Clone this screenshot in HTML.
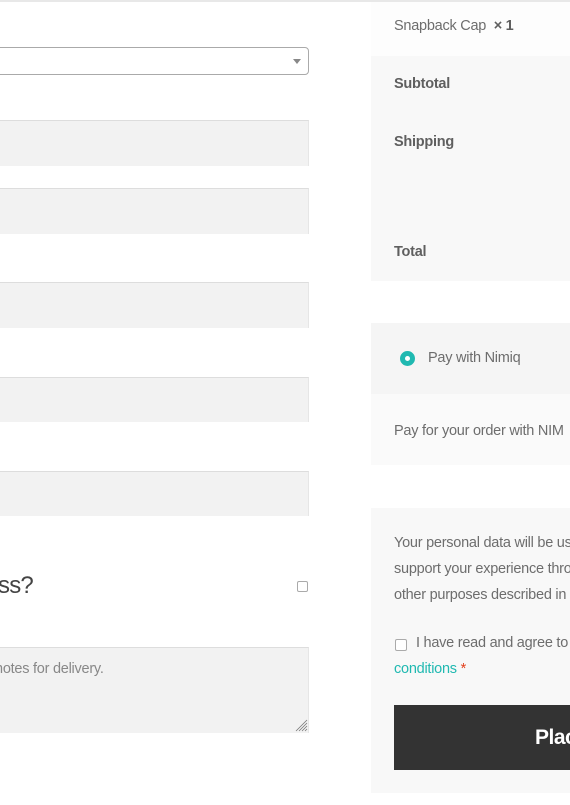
<!DOCTYPE html>
<html><head><meta charset="utf-8"><style>
*{margin:0;padding:0;box-sizing:border-box}
html,body{width:570px;height:805px;overflow:hidden;background:#fff;font-family:"Liberation Sans",sans-serif;color:#6d6d6d}
#w{position:relative;width:570px;height:805px;overflow:hidden}
.a{position:absolute}
.inp{position:absolute;left:0;width:309px;background:#f2f2f2;border-top:1px solid #ddd;border-right:1px solid #e6e6e6}
.t{position:absolute;font-size:14.5px;letter-spacing:-0.25px;white-space:nowrap}
b{font-weight:bold;color:#5f5f5f}
</style></head><body><div id="w">
<div class="a" style="left:0;top:0;width:570px;height:2px;background:#e8e8e8"></div>
<div class="a" style="left:-6px;top:47px;width:315px;height:28px;border:1px solid #aaa;border-radius:4px;background:#fff"></div>
<div class="a" style="left:293px;top:59px;width:0;height:0;border-left:4px solid transparent;border-right:4px solid transparent;border-top:5px solid #888"></div>
<div class="inp" style="top:120px;height:46px"></div>
<div class="inp" style="top:188px;height:46px"></div>
<div class="inp" style="top:282px;height:46px"></div>
<div class="inp" style="top:377px;height:45px"></div>
<div class="inp" style="top:471px;height:45px"></div>
<div class="t" style="left:-2px;top:572px;font-size:24px;color:#444;letter-spacing:-0.8px">ss?</div>
<div class="a" style="left:297px;top:581px;width:11px;height:11px;border:1px solid #aaa;border-radius:2px;background:#fff"></div>
<div class="inp" style="top:647px;height:86px"></div>
<div class="t" style="left:-5px;top:661px;color:#888">notes for delivery.</div>
<svg class="a" style="left:295px;top:719px" width="13" height="13"><path d="M12 1L1 12M12 4L4 12M12 7L7 12M12 10L10 12" stroke="#777" stroke-width="0.8"/></svg>

<div class="a" style="left:371px;top:2px;width:199px;height:54px;background:#fdfdfd"></div>
<div class="t" style="left:394px;top:18px">Snapback Cap&nbsp; <b>× 1</b></div>
<div class="a" style="left:371px;top:56px;width:199px;height:225px;background:#f8f8f8"></div>
<div class="t" style="left:394px;top:76px"><b>Subtotal</b></div>
<div class="t" style="left:394px;top:134px"><b>Shipping</b></div>
<div class="t" style="left:394px;top:244px"><b>Total</b></div>

<div class="a" style="left:371px;top:323px;width:199px;height:71px;background:#f5f5f5"></div>
<div class="a" style="left:400px;top:351px;width:15px;height:15px;border-radius:50%;background:#20b9b1"></div>
<div class="a" style="left:405px;top:356px;width:5px;height:5px;border-radius:50%;background:#fff"></div>
<div class="t" style="left:428px;top:350px">Pay with Nimiq</div>
<div class="a" style="left:371px;top:394px;width:199px;height:71px;background:#fafafa"></div>
<div class="t" style="left:394px;top:423px">Pay for your order with NIM</div>

<div class="a" style="left:371px;top:508px;width:199px;height:285px;background:#f8f8f8"></div>
<div class="t" style="left:394px;top:535px">Your personal data will be used</div>
<div class="t" style="left:394px;top:561px">support your experience through</div>
<div class="t" style="left:394px;top:587px">other purposes described in our</div>
<div class="a" style="left:395px;top:639px;width:12px;height:12px;border:1px solid #aaa;border-radius:2px;background:#fff"></div>
<div class="t" style="left:416px;top:635px">I have read and agree to the</div>
<div class="t" style="left:394px;top:661px;color:#20b9b1">conditions <span style="color:#e2401c">*</span></div>
<div class="a" style="left:394px;top:705px;width:176px;height:65px;background:#333"></div>
<div class="t" style="left:535px;top:726px;color:#fff;font-weight:bold;font-size:21px;letter-spacing:-0.5px">Place</div>
</div></body></html>
